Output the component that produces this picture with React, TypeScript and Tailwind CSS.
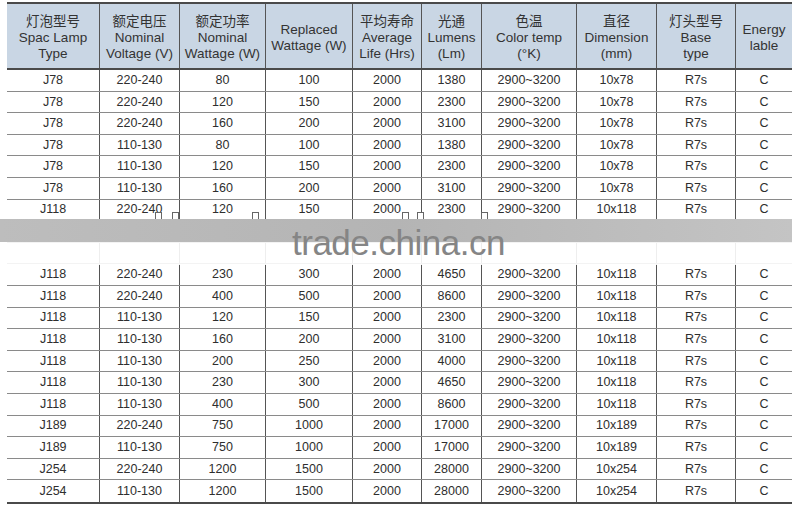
const cols = [93, 80, 86, 87, 69, 60, 95, 80, 79, 56];

const headers: string[][] = [
  ['灯泡型号', 'Spac Lamp', 'Type'],
  ['额定电压', 'Nominal', 'Voltage (V)'],
  ['额定功率', 'Nominal', 'Wattage (W)'],
  ['Replaced', 'Wattage (W)'],
  ['平均寿命', 'Average', 'Life (Hrs)'],
  ['光通', 'Lumens', '(Lm)'],
  ['色温', 'Color temp', '(°K)'],
  ['直径', 'Dimension', '(mm)'],
  ['灯头型号', 'Base', 'type'],
  ['Energy', 'lable'],
];

// [type, voltage, watt, replaced, lumens]; null = row covered by the watermark
const rows: ([string, string, string, string, string] | null)[] = [
  ['J78', '220-240', '80', '100', '1380'],
  ['J78', '220-240', '120', '150', '2300'],
  ['J78', '220-240', '160', '200', '3100'],
  ['J78', '110-130', '80', '100', '1380'],
  ['J78', '110-130', '120', '150', '2300'],
  ['J78', '110-130', '160', '200', '3100'],
  ['J118', '220-240', '120', '150', '2300'],
  null,
  null,
  ['J118', '220-240', '230', '300', '4650'],
  ['J118', '220-240', '400', '500', '8600'],
  ['J118', '110-130', '120', '150', '2300'],
  ['J118', '110-130', '160', '200', '3100'],
  ['J118', '110-130', '200', '250', '4000'],
  ['J118', '110-130', '230', '300', '4650'],
  ['J118', '110-130', '400', '500', '8600'],
  ['J189', '220-240', '750', '1000', '17000'],
  ['J189', '110-130', '750', '1000', '17000'],
  ['J254', '220-240', '1200', '1500', '28000'],
  ['J254', '110-130', '1200', '1500', '28000'],
];

const gridCols = 'grid grid-cols-[93px_80px_86px_87px_69px_60px_95px_80px_79px_56px]';

export default function App() {
  return (
    <div
      className="relative h-[507px] w-[798px] overflow-hidden bg-white pl-[7px] pt-[2px] text-[#2e2e2e]"
      style={{ fontFamily: '"Liberation Sans", Arial, "Noto Sans CJK SC", sans-serif' }}
    >
      <div className="w-[785px] border-y-2 border-[#4a4a4a]">
        <div className={`${gridCols} h-[66px] border-b-2 border-[#4a4a4a] bg-[#c9d6e4]`}>
          {headers.map((h, i) => (
            <div
              key={i}
              className={`flex flex-col items-center justify-center pt-[3px] text-center text-[13.5px] leading-[16px] text-[#333] ${
                i < cols.length - 1 ? 'border-r border-[#555]' : ''
              }`}
            >
              {h.map((line, j) => (
                <span key={j} className="whitespace-nowrap">
                  {line}
                </span>
              ))}
            </div>
          ))}
        </div>
        {rows.map((r, idx) => {
          const cells = r
            ? [r[0], r[1], r[2], r[3], '2000', r[4], '2900~3200', `10x${r[0].slice(1)}`, 'R7s', 'C']
            : cols.map(() => '');
          return (
            <div
              key={idx}
              className={`${gridCols} h-[21.6px] ${idx < rows.length - 1 ? 'border-b border-[#8a8a8a]' : ''}`}
            >
              {cells.map((c, i) => (
                <div
                  key={i}
                  className={`flex items-center justify-center text-[12.5px] ${
                    i < cols.length - 1 ? 'border-r border-[#555]' : ''
                  }`}
                >
                  {c}
                </div>
              ))}
            </div>
          );
        })}
      </div>

      {/* watermark overlay */}
      <div className="absolute left-0 top-[219px] w-[792px]">
        <div className="relative h-[23px] bg-gradient-to-r from-[#bdbdbd] via-[#b4b4b4] to-[#c4c4c4]">
          <div className="absolute -top-[7px] left-0 flex w-full">
            <span className="ml-[155px] h-[7px] w-[7px] border border-b-0 border-[#666] bg-white" />
            <span className="ml-[10px] h-[7px] w-[7px] border border-b-0 border-[#666] bg-white" />
            <span className="ml-[73px] h-[7px] w-[7px] border border-b-0 border-[#666] bg-white" />
            <span className="ml-[143px] h-[7px] w-[7px] border border-b-0 border-[#666] bg-white" />
            <span className="ml-[8px] h-[7px] w-[7px] border border-b-0 border-[#666] bg-white" />
            <span className="ml-[57px] h-[7px] w-[7px] border border-b-0 border-[#666] bg-white" />
          </div>
        </div>
        <div className="h-[23px] bg-white/90" />
        <div className="absolute left-[292px] top-[4px] text-[35px] leading-[40px] tracking-[-0.5px] text-[#858585]">
          trade.china.cn
        </div>
      </div>
    </div>
  );
}
